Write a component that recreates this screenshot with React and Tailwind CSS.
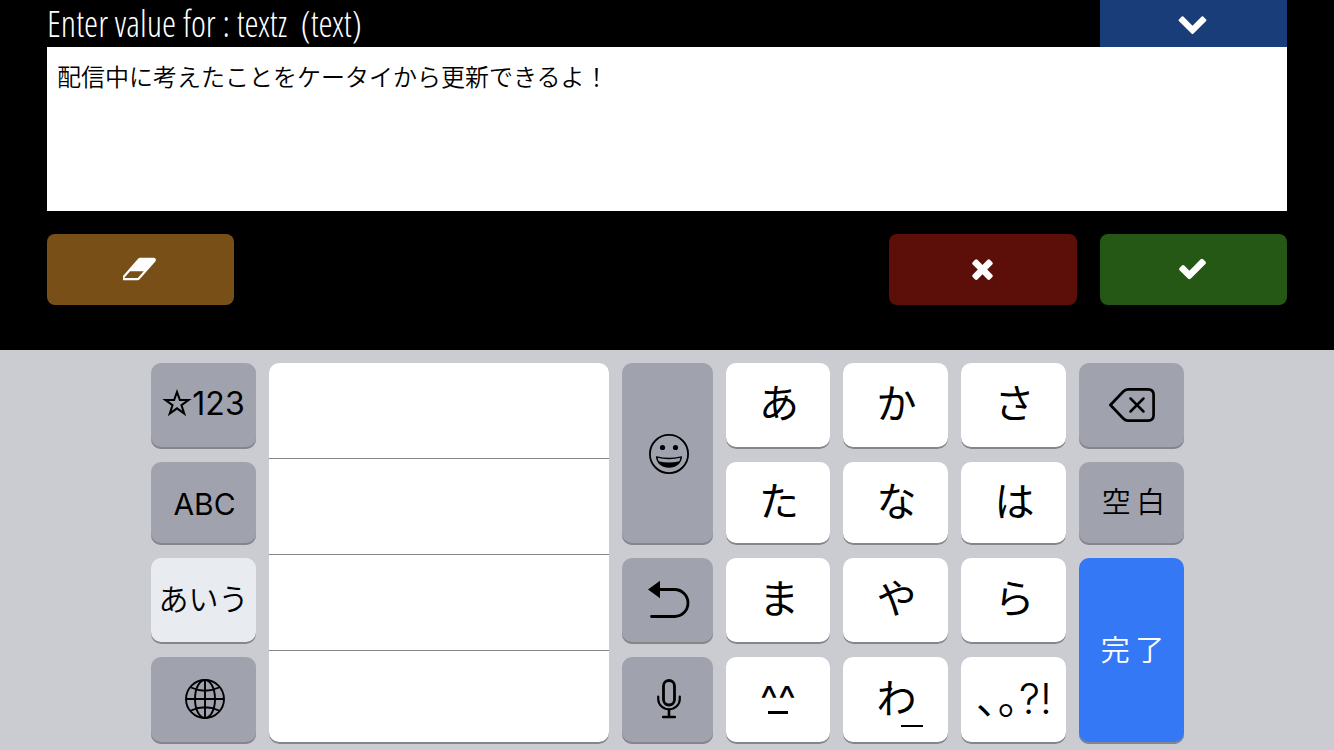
import React from "react";

const chevronPath =
  "M1683 808l-742 741q-19 19-45 19t-45-19l-742-741q-19-19-19-45.5t19-45.5l166-165q19-19 45-19t45 19l531 531 531-531q19-19 45-19t45 19l166 165q19 19 19 45.5t-19 45.5z";
const timesPath =
  "M1490 1322q0 40-28 68l-136 136q-28 28-68 28t-68-28l-294-294-294 294q-28 28-68 28t-68-28l-136-136q-28-28-28-68t28-68l294-294-294-294q-28-28-28-68t28-68l136-136q28-28 68-28t68 28l294 294 294-294q28-28 68-28t68 28l136 136q28 28 28 68t-28 68l-294 294 294 294q28 28 28 68z";
const checkPath =
  "M1671 566q0 40-28 68l-724 724-136 136q-28 28-68 28t-68-28l-136-136-362-362q-28-28-28-68t28-68l136-136q28-28 68-28t68 28l294 295 656-657q28-28 68-28t68 28l136 136q28 28 28 68z";
const eraserPath =
  "M832 1408l336-384h-768l-336 384h768zm1013-1077q15 34 9.5 71.5t-30.5 65.5l-896 1024q-38 44-96 44h-768q-38 0-69.5-20.5t-47.5-54.5q-15-34-9.5-71.5t30.5-65.5l896-1024q38-44 96-44h768q38 0 69.5 20.5t47.5 54.5z";

function SolidIcon({ path, viewBox = "0 0 1792 1792", className = "size-[31px]" }) {
  return (
    <svg viewBox={viewBox} className={className} fill="currentColor" aria-hidden="true">
      <path d={path} />
    </svg>
  );
}

function StarIcon() {
  return (
    <svg viewBox="0 0 30 32" className="h-8 w-[30px]" fill="none" stroke="currentColor" strokeWidth="2.1" aria-hidden="true">
      <path d="M15 4 17.900 12H26.500L19.500 17.200 22.200 25.600 15 20.400 7.800 25.600 10.500 17.200 3.500 12H12.100Z" />
    </svg>
  );
}

function GlobeIcon() {
  return (
    <svg viewBox="0 0 40 40" className="size-10" fill="none" stroke="currentColor" strokeWidth="1.9" aria-hidden="true">
      <circle cx="20" cy="20" r="19" />
      <ellipse cx="20" cy="20" rx="10" ry="19" />
      <path d="M20 1v38M1 20h38M6 8.5Q20 15 34 8.5M6 31.5Q20 25 34 31.5" />
    </svg>
  );
}

function SmileIcon() {
  return (
    <svg viewBox="0 0 40 40" className="size-10" fill="none" stroke="currentColor" strokeWidth="1.8" aria-hidden="true">
      <circle cx="20" cy="20" r="19.1" />
      <circle cx="13.5" cy="13.5" r="2.6" fill="currentColor" stroke="none" />
      <circle cx="26.5" cy="13.5" r="2.6" fill="currentColor" stroke="none" />
      <path d="M7.600 22.900Q20 26 32.400 22.900C31.700 29 27 33 20 33S8.300 29 7.600 22.900z" strokeWidth="1.400" strokeLinejoin="round" />
      <path d="M9.500 27.200Q20 30 30.500 27.200C28.500 31 25 33 20 33S11.500 31 9.500 27.200z" fill="currentColor" stroke="none" />
    </svg>
  );
}

function UndoIcon() {
  return (
    <svg viewBox="0 0 42 38" className="h-[38px] w-[42px]" fill="none" stroke="currentColor" strokeWidth="2.8" aria-hidden="true">
      <path d="M11 9.500h15.500a13.500 13.500 0 0 1 0 27H3.500" strokeLinecap="round" />
      <path d="M0 9.500 12 .8v17.500z" fill="currentColor" stroke="none" />
    </svg>
  );
}

function MicIcon() {
  return (
    <svg viewBox="0 0 24 40" className="h-10 w-6" fill="none" stroke="currentColor" strokeLinecap="round" aria-hidden="true">
      <rect x="6.500" y="1.500" width="11" height="24.500" rx="5.500" strokeWidth="2.800" />
      <path d="M1.200 17.500v2.500a10.800 10.300 0 0 0 21.600 0v-2.500" strokeWidth="2.200" />
      <path d="M12 31v7M6.200 38h11.600" strokeWidth="2.600" />
    </svg>
  );
}

function BackspaceIcon() {
  return (
    <svg viewBox="0 0 46 34" className="h-[34px] w-[46px]" fill="none" stroke="currentColor" strokeLinecap="round" strokeLinejoin="round" aria-hidden="true">
      <path d="M1.400 17 14.300 3.500Q16.300 1.400 19 1.400H39Q44.600 1.400 44.600 7V27Q44.600 32.600 39 32.600H19Q16.300 32.600 14.300 30.500Z" strokeWidth="2.700" />
      <path d="M21.500 10.500l13 13M34.500 10.500l-13 13" strokeWidth="2.500" />
    </svg>
  );
}

const tones = {
  white: "bg-white text-black",
  gray: "bg-[#a0a3ae] text-black",
  active: "bg-[#e8ebf0] text-black",
  blue: "bg-[#3478f6] text-white",
};

function Key({ tone = "white", place, label, children, pad = "pb-1", className = "pl-0.5 text-[40px]" }) {
  return (
    <button
      type="button"
      aria-label={label}
      className={`flex items-center justify-center rounded-[10px] whitespace-nowrap leading-none shadow-[inset_0_-2px_0_#85868b] ${pad} ${tones[tone]} ${place} ${className}`}
    >
      {children}
    </button>
  );
}

export default function App() {
  return (
    <main className="flex min-h-screen flex-col bg-black font-['Inter','Noto_Sans_CJK_JP',sans-serif]">
      <form className="flex flex-1 flex-col px-[47px] pb-11" onSubmit={(e) => e.preventDefault()}>
        <div className="flex h-[47px] items-center justify-between">
          <label
            htmlFor="value"
            className="whitespace-pre font-['Open_Sans_Condensed_Light','Noto_Sans_ExtraCondensed_Light','Noto_Sans_ExtraCondensed','Roboto_Condensed_Light','Roboto_Condensed','Liberation_Sans_Narrow',sans-serif] text-[36px] font-light leading-none text-white"
          >
            {"Enter value for : textz  (text)"}
          </label>
          <button type="button" aria-label="Hide" className="flex h-full w-[187px] items-center justify-center bg-[#183d79] pr-0.5 pb-0.5 text-white">
            <SolidIcon path={chevronPath} />
          </button>
        </div>
        <textarea
          id="value"
          className="block h-[164px] w-full resize-none bg-white px-[10px] py-3 font-['Noto_Sans_CJK_JP',sans-serif] text-2xl font-[350] leading-[34px] text-black outline-none"
          defaultValue="配信中に考えたことをケータイから更新できるよ！"
        />
        <div className="mt-[23px] flex gap-[23px]">
          <button type="button" aria-label="Clear" className="mr-auto flex h-[71px] w-[187px] items-center justify-center rounded-lg bg-[#784f17] pr-0.5 pb-0.5 text-white">
            <SolidIcon path={eraserPath} viewBox="0 0 1920 1792" className="h-[32px] w-[34px]" />
          </button>
          <button type="button" aria-label="Cancel" className="flex h-[71px] w-[188px] items-center justify-center rounded-lg bg-[#5c0f08] pr-0.5 pb-0.5 text-white">
            <SolidIcon path={timesPath} />
          </button>
          <button type="submit" aria-label="OK" className="flex h-[71px] w-[187px] items-center justify-center rounded-lg bg-[#245814] pr-0.5 pb-0.5 text-white">
            <SolidIcon path={checkPath} />
          </button>
        </div>
      </form>

      <section
        aria-label="Keyboard"
        className="grid grid-cols-[105fr_340fr_91fr_104fr_105fr_105fr_105fr] grid-rows-[86px_83px_86px_87px] gap-[13px] bg-[#cbccd1] pt-[13px] pr-[150px] pb-[6px] pl-[151px]"
      >
        <Key tone="gray" place="col-start-1 row-start-1" label="☆123" className="text-[32px]">
          <StarIcon />
          123
        </Key>
        <Key tone="gray" place="col-start-1 row-start-2" pad="pb-0" className="pl-0.5 text-[30px]">ABC</Key>
        <Key tone="active" place="col-start-1 row-start-3" className="text-[30px] font-[350]">あいう</Key>
        <Key tone="gray" place="col-start-1 row-start-4" label="Next keyboard">
          <GlobeIcon />
        </Key>

        <div className="col-start-2 row-span-4 row-start-1 flex flex-col rounded-[10px] bg-white shadow-[inset_0_-2px_0_#85868b]">
          <div className="h-24 border-b border-[#85868b]" />
          <div className="h-24 border-b border-[#85868b]" />
          <div className="h-24 border-b border-[#85868b]" />
        </div>

        <Key tone="gray" place="col-start-3 row-span-2 row-start-1" label="Emoji" pad="pb-0">
          <SmileIcon />
        </Key>
        <Key tone="gray" place="col-start-3 row-start-3" label="Undo">
          <UndoIcon />
        </Key>
        <Key tone="gray" place="col-start-3 row-start-4" label="Dictation">
          <MicIcon />
        </Key>

        <Key place="col-start-4 row-start-1">あ</Key>
        <Key place="col-start-5 row-start-1">か</Key>
        <Key place="col-start-6 row-start-1">さ</Key>
        <Key place="col-start-4 row-start-2">た</Key>
        <Key place="col-start-5 row-start-2">な</Key>
        <Key place="col-start-6 row-start-2">は</Key>
        <Key place="col-start-4 row-start-3">ま</Key>
        <Key place="col-start-5 row-start-3">や</Key>
        <Key place="col-start-6 row-start-3">ら</Key>
        <Key place="col-start-4 row-start-4" label="^_^" className="text-[38px]">
          <span className="relative">
            ^^
            <span className="absolute bottom-1 left-1/2 h-[3px] w-5 -translate-x-1/2 bg-current" />
          </span>
        </Key>
        <Key place="col-start-5 row-start-4" label="わ_">
          <span className="relative">
            わ
            <span className="absolute -right-1.5 -bottom-2 h-0.5 w-[22px] bg-current" />
          </span>
        </Key>
        <Key place="col-start-6 row-start-4" className="pl-0.5 text-[42px] font-[350]">､｡?!</Key>

        <Key tone="gray" place="col-start-7 row-start-1" label="Delete" pad="pb-0.5" className="text-[40px]">
          <BackspaceIcon />
        </Key>
        <Key tone="gray" place="col-start-7 row-start-2" pad="pb-0.5" className="pl-1 text-[29px] font-[350]">{"空\u2009白"}</Key>
        <Key tone="blue" place="col-start-7 row-span-2 row-start-3" pad="pb-0.5" className="pl-0.5 text-[29px] font-[350]">{"完\u2009了"}</Key>
      </section>
    </main>
  );
}
